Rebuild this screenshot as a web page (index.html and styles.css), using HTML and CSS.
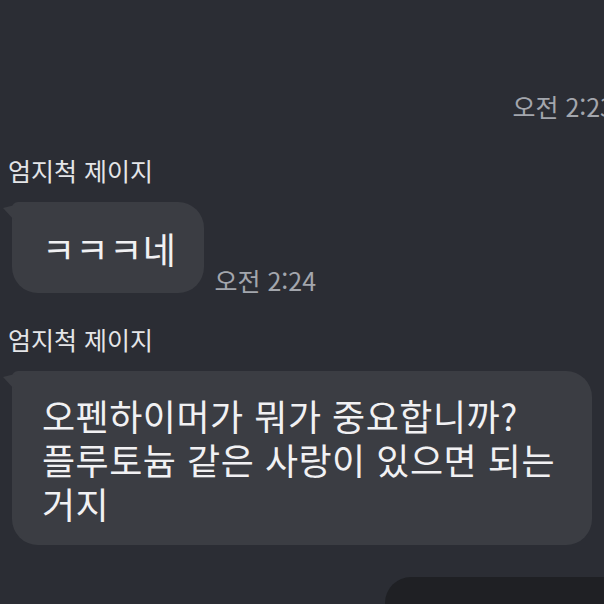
FILE: index.html
```html
<!DOCTYPE html>
<html lang="ko">
<head>
    <meta charset="UTF-8">
    <meta name="viewport" content="width=device-width, initial-scale=1.0">
    <title>채팅</title>
    <link rel="stylesheet" href="styles.css">
</head>
<body>
    <div class="chat">
        <div class="time-row">
            <span class="time">오전 2:23</span>
        </div>

        <div class="group">
            <div class="name">엄지척 제이지</div>
            <div class="msg-row">
                <div class="bubble short">ㅋㅋㅋ네</div>
                <span class="time">오전 2:24</span>
            </div>
        </div>

        <div class="group">
            <div class="name">엄지척 제이지</div>
            <div class="msg-row">
                <div class="bubble">오펜하이머가 뭐가 중요합니까? 플루토늄 같은 사랑이 있으면 되는 거지</div>
            </div>
        </div>

        <div class="sent-row">
            <div class="bubble sent"></div>
        </div>
    </div>
</body>
</html>
```

FILE: styles.css
```css
body {
    margin: 0;
    padding: 0;
    background-color: #2b2d34;
    font-family: "Noto Sans CJK KR", "Noto Sans", sans-serif;
    overflow: hidden;
    height: 604px;
}
.chat {
    width: 614px;
    padding: 89px 0 0 8px;
    box-sizing: border-box;
}
.time-row {
    display: flex;
    justify-content: flex-end;
}
.time {
    font-size: 25px;
    line-height: 34px;
    color: #a3a6ad;
    white-space: nowrap;
}
.group {
    margin-top: 29px;
}
.time-row + .group {
    margin-top: 30px;
}
.name {
    font-size: 25px;
    line-height: 34px;
    color: #e4e5e8;
    margin-bottom: 15px;
}
.msg-row {
    display: flex;
    align-items: flex-end;
    gap: 10px;
    padding-left: 4px;
}
.bubble {
    position: relative;
    background-color: #3b3d43;
    color: #f1f1f3;
    font-size: 36px;
    line-height: 44px;
    letter-spacing: 0.5px;
    word-break: keep-all;
    padding: 22px 28px 20px 30px;
    border-radius: 6px 26px 26px 26px;
    max-width: 580px;
    box-sizing: border-box;
}
.bubble.short {
    padding-top: 24px;
    padding-bottom: 23px;
}
.bubble::before {
    content: "";
    position: absolute;
    left: -9px;
    top: 3px;
    width: 12px;
    height: 16px;
    background-color: #3b3d43;
    clip-path: polygon(0 18%, 100% 0, 100% 100%);
}
.msg-row .time {
    margin-bottom: -4px;
}
.sent-row {
    display: flex;
    justify-content: flex-end;
    margin-top: 32px;
}
.bubble.sent {
    width: 229px;
    height: 27px;
    background-color: #1f2024;
    border-radius: 26px 0 0 0;
    padding: 0;
}
.bubble.sent::before {
    display: none;
}
```
